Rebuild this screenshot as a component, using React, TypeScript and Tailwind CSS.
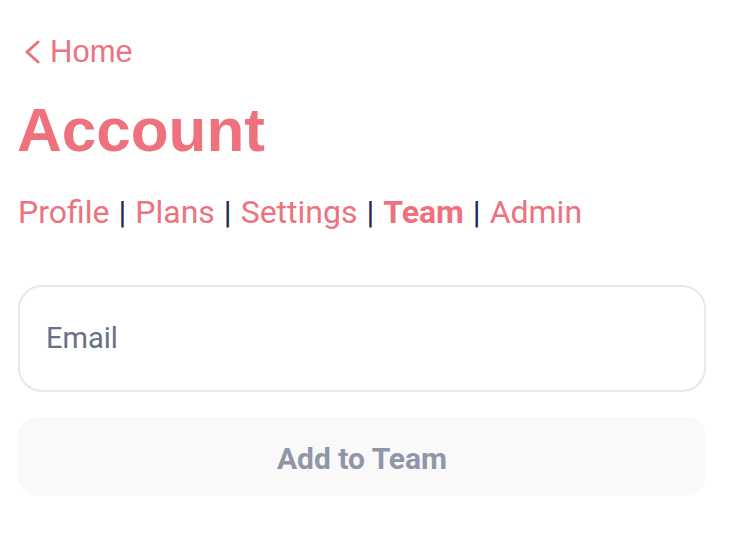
const links = ['Profile', 'Plans', 'Settings', 'Team', 'Admin'];

export default function App() {
  return (
    <div className="min-h-[544px] w-[732px] bg-white px-[18px] pt-[34px]">
      <a className="flex items-center gap-[10px] text-[#ee727e] font-['Liberation_Sans',sans-serif] text-[31px] leading-[36px]">
        <svg width="16" height="24" viewBox="0 0 16 24" className="ml-[6px]" fill="none">
          <polyline points="14,2 3,12 14,22" stroke="#ee727e" strokeWidth="3" strokeLinecap="round" strokeLinejoin="round" />
        </svg>
        <span>Home</span>
      </a>

      <h1 className="mt-[25px] text-[62px] leading-[70px] font-bold text-[#ee727e] font-['Liberation_Sans',sans-serif] -ml-[1px]">
        Account
      </h1>

      <nav className="mt-[27px] flex items-center text-[32px] leading-[40px] font-['Roboto',sans-serif] text-[#ee727e]">
        {links.map((l, i) => (
          <span key={l} className="flex items-center">
            <span className={l === 'Team' ? 'font-bold' : ''}>{l}</span>
            {i < links.length - 1 && <span className="mx-[9px] text-[#1e2a55]">|</span>}
          </span>
        ))}
      </nav>

      <div className="mt-[53px] flex h-[107px] w-[688px] items-center rounded-[24px] border-2 border-[#e7e7ec] px-[26px]">
        <span className="text-[29px] text-[#667085] font-['Roboto',sans-serif]">Email</span>
      </div>

      <button className="mt-[25px] flex h-[79px] w-[688px] items-center justify-center rounded-[20px] bg-[#f9f9fa] pt-[3px] text-[30px] font-bold text-[#9096a8] font-['Roboto',sans-serif]">
        Add to Team
      </button>
    </div>
  );
}
